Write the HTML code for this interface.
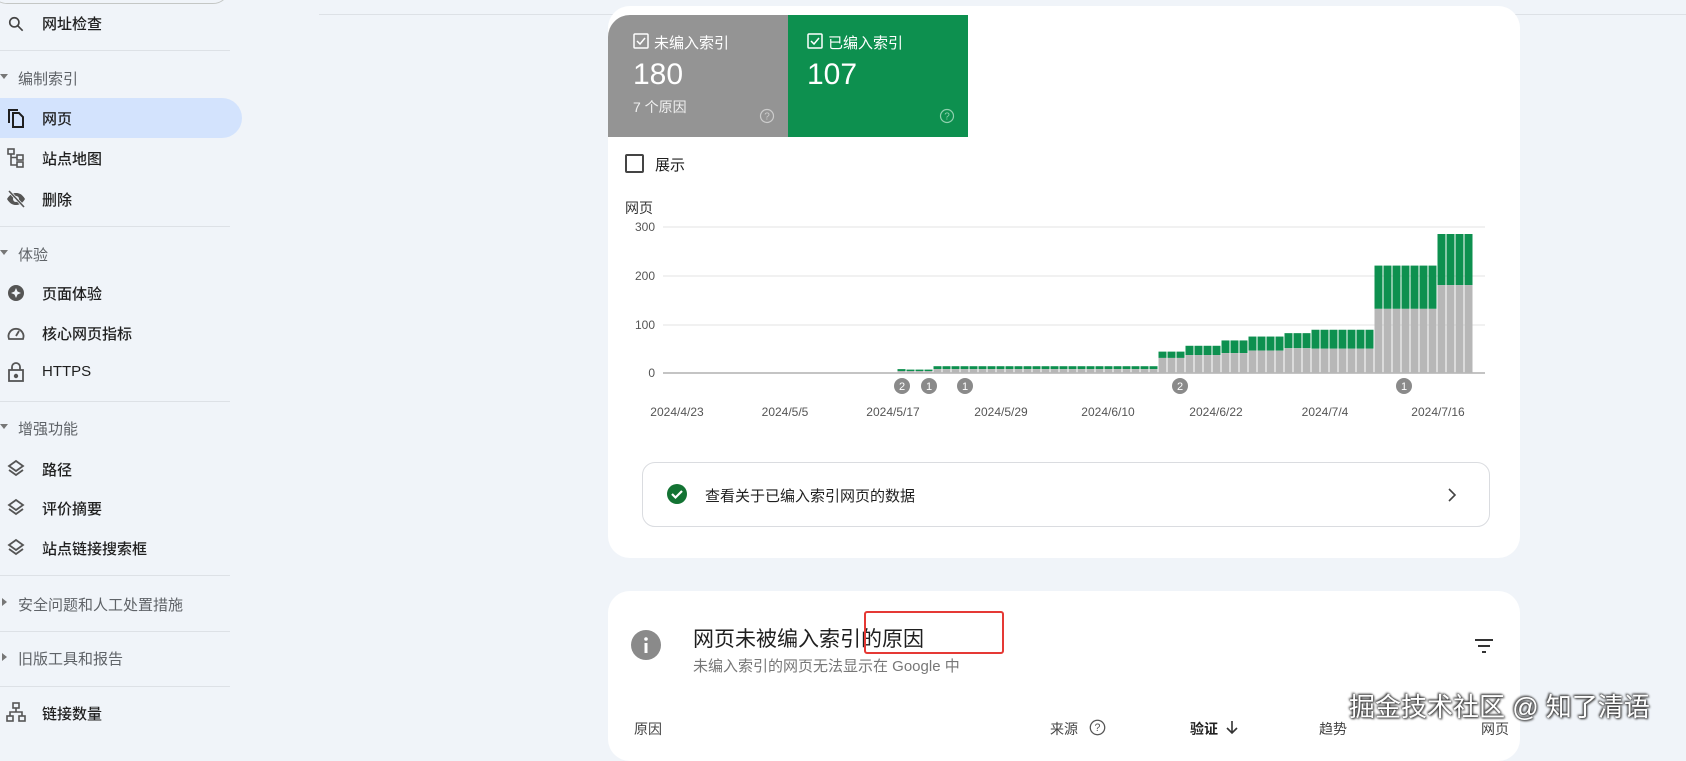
<!DOCTYPE html>
<html><head><meta charset="utf-8">
<style>
*{margin:0;padding:0;box-sizing:border-box}
body{width:1686px;height:738px;overflow:hidden;background:#f0f4f9;font-family:"Liberation Sans","Noto Sans CJK SC",sans-serif;position:relative;color:#1f1f1f}
.a{position:absolute;white-space:nowrap}
.si{font-size:15px;color:#1f1f1f;font-weight:500}
.sh{font-size:15px;color:#5f6368}
.dv{position:absolute;left:0;width:230px;height:1px;background:#dde1e6}
.ic{position:absolute;left:6px}
.card{position:absolute;background:#fff;border-radius:22px;left:608px;width:912px}
</style></head><body>
<div class="a" style="left:-10px;top:-30px;width:240px;height:34px;border:1px solid #c4c7c5;border-radius:17px"></div>
<div class="a" style="left:319px;top:14px;width:1367px;height:1px;background:#dde1e6"></div>

<!-- sidebar -->
<svg class="ic" style="top:14px" width="20" height="20" viewBox="0 0 24 24"><circle cx="10" cy="10" r="5.5" fill="none" stroke="#444" stroke-width="2"/><path d="M14 14l6 6" stroke="#444" stroke-width="2"/></svg>
<div class="a si" style="left:42px;top:13px">网址检查</div>
<div class="dv" style="top:50px"></div>
<div class="a" style="left:0;top:74px;border:4px solid transparent;border-top:5px solid #777"></div>
<div class="a sh" style="left:18px;top:68px">编制索引</div>
<div class="a" style="left:-20px;top:98px;width:262px;height:40px;background:#d3e3fd;border-radius:0 20px 20px 0"></div>
<svg class="ic" style="top:107px" width="20" height="22" viewBox="0 0 20 22"><path d="M3 16V3h9" fill="none" stroke="#1f1f1f" stroke-width="2"/><path d="M7 6h6l4 4v10H7z" fill="none" stroke="#1f1f1f" stroke-width="2"/></svg>
<div class="a si" style="left:42px;top:108px">网页</div>
<svg class="ic" style="top:148px" width="20" height="20" viewBox="0 0 20 20" fill="none" stroke="#555" stroke-width="1.6"><rect x="2" y="1" width="6" height="5"/><rect x="11" y="7" width="6" height="5"/><rect x="11" y="14" width="6" height="5"/><path d="M5 6v11h6M5 9.5h6"/></svg>
<div class="a si" style="left:42px;top:148px">站点地图</div>
<svg class="ic" style="top:189px" width="20" height="20" viewBox="0 0 20 20"><path d="M1 10c3-5 6-6 9-6s6 1 9 6c-3 5-6 6-9 6s-6-1-9-6z" fill="#555"/><circle cx="10" cy="10" r="3" fill="#f0f4f9"/><path d="M3 2l15 16" stroke="#f0f4f9" stroke-width="3"/><path d="M3 2l15 16" stroke="#555" stroke-width="1.6"/></svg>
<div class="a si" style="left:42px;top:189px">删除</div>
<div class="dv" style="top:226px"></div>
<div class="a" style="left:0;top:250px;border:4px solid transparent;border-top:5px solid #777"></div>
<div class="a sh" style="left:18px;top:244px">体验</div>
<svg class="ic" style="top:283px" width="20" height="20" viewBox="0 0 20 20"><circle cx="10" cy="10" r="8" fill="#555"/><path d="M10 5l1.5 3.5L15 10l-3.5 1.5L10 15l-1.5-3.5L5 10l3.5-1.5z" fill="#f0f4f9"/></svg>
<div class="a si" style="left:42px;top:283px">页面体验</div>
<svg class="ic" style="top:323px" width="20" height="20" viewBox="0 0 20 20" fill="none" stroke="#555" stroke-width="1.8"><path d="M3 16a7.5 7.5 0 1 1 14 0z"/><path d="M10 13l3-5"/></svg>
<div class="a si" style="left:42px;top:323px">核心网页指标</div>
<svg class="ic" style="top:361px" width="20" height="22" viewBox="0 0 20 22" fill="none" stroke="#555" stroke-width="1.8"><rect x="3" y="9" width="14" height="11"/><path d="M6 9V6a4 4 0 0 1 8 0v3"/><circle cx="10" cy="15" r="1.3" fill="#555"/></svg>
<div class="a si" style="left:42px;top:363px">HTTPS</div>
<div class="dv" style="top:401px"></div>
<div class="a" style="left:0;top:424px;border:4px solid transparent;border-top:5px solid #777"></div>
<div class="a sh" style="left:18px;top:418px">增强功能</div>
<svg class="ic" style="top:459px" width="20" height="20" viewBox="0 0 20 20" fill="none" stroke="#555" stroke-width="1.8"><path d="M10 2l7 5-7 5-7-5z"/><path d="M3 11l7 5 7-5"/></svg>
<div class="a si" style="left:42px;top:459px">路径</div>
<svg class="ic" style="top:498px" width="20" height="20" viewBox="0 0 20 20" fill="none" stroke="#555" stroke-width="1.8"><path d="M10 2l7 5-7 5-7-5z"/><path d="M3 11l7 5 7-5"/></svg>
<div class="a si" style="left:42px;top:498px">评价摘要</div>
<svg class="ic" style="top:538px" width="20" height="20" viewBox="0 0 20 20" fill="none" stroke="#555" stroke-width="1.8"><path d="M10 2l7 5-7 5-7-5z"/><path d="M3 11l7 5 7-5"/></svg>
<div class="a si" style="left:42px;top:538px">站点链接搜索框</div>
<div class="dv" style="top:575px"></div>
<div class="a" style="left:2px;top:598px;border:4px solid transparent;border-left:5px solid #777"></div>
<div class="a sh" style="left:18px;top:594px">安全问题和人工处置措施</div>
<div class="dv" style="top:631px"></div>
<div class="a" style="left:2px;top:653px;border:4px solid transparent;border-left:5px solid #777"></div>
<div class="a sh" style="left:18px;top:648px">旧版工具和报告</div>
<div class="dv" style="top:686px"></div>
<svg class="ic" style="top:702px" width="20" height="20" viewBox="0 0 20 20" fill="none" stroke="#555" stroke-width="1.6"><rect x="7" y="1" width="6" height="5"/><rect x="1" y="14" width="6" height="5"/><rect x="13" y="14" width="6" height="5"/><path d="M10 6v4M4 14v-4h12v4"/></svg>
<div class="a si" style="left:42px;top:703px">链接数量</div>

<!-- card 1 -->
<div class="card" style="top:6px;height:552px"></div>
<div class="a" style="left:608px;top:15px;width:180px;height:122px;background:#949494;border-top-left-radius:22px"></div>
<div class="a" style="left:788px;top:15px;width:180px;height:122px;background:#0d904f"></div>
<svg class="a" style="left:633px;top:33px" width="16" height="16" viewBox="0 0 16 16"><rect x="1" y="1" width="14" height="14" fill="none" stroke="#fff" stroke-width="1.5" rx="1"/><path d="M4 8l3 3 5-6" fill="none" stroke="#fff" stroke-width="1.5"/></svg>
<div class="a" style="left:654px;top:32px;color:#fff;font-size:15px">未编入索引</div>
<div class="a" style="left:633px;top:58px;color:#fff;font-size:30px">180</div>
<div class="a" style="left:633px;top:97px;color:#f0f0f0;font-size:14px">7 个原因</div>
<svg class="a" style="left:759px;top:108px" width="16" height="16" viewBox="0 0 16 16"><circle cx="8" cy="8" r="6.5" fill="none" stroke="#ccc" stroke-width="1.2"/><text x="8" y="11.5" font-size="10" fill="#ccc" text-anchor="middle" font-family="Liberation Sans">?</text></svg>
<svg class="a" style="left:807px;top:33px" width="16" height="16" viewBox="0 0 16 16"><rect x="1" y="1" width="14" height="14" fill="none" stroke="#fff" stroke-width="1.5" rx="1"/><path d="M4 8l3 3 5-6" fill="none" stroke="#fff" stroke-width="1.5"/></svg>
<div class="a" style="left:828px;top:32px;color:#fff;font-size:15px">已编入索引</div>
<div class="a" style="left:807px;top:58px;color:#fff;font-size:30px">107</div>
<svg class="a" style="left:939px;top:108px" width="16" height="16" viewBox="0 0 16 16"><circle cx="8" cy="8" r="6.5" fill="none" stroke="#8fd0ae" stroke-width="1.2"/><text x="8" y="11.5" font-size="10" fill="#8fd0ae" text-anchor="middle" font-family="Liberation Sans">?</text></svg>

<div class="a" style="left:625px;top:154px;width:19px;height:19px;border:2px solid #444;border-radius:2px"></div>
<div class="a" style="left:655px;top:154px;font-size:15px">展示</div>
<div class="a" style="left:625px;top:198px;font-size:14px;color:#333">网页</div>

<svg class="a" id="ch" style="left:608px;top:210px" width="912" height="220" font-family="Liberation Sans" font-size="12"></svg>

<div class="a" style="left:642px;top:462px;width:848px;height:65px;border:1px solid #dadce0;border-radius:13px"></div>
<svg class="a" style="left:667px;top:484px" width="20" height="20" viewBox="0 0 20 20"><circle cx="10" cy="10" r="10" fill="#137333"/><path d="M5 10l3.5 3.5L15 7" fill="none" stroke="#fff" stroke-width="2.2"/></svg>
<div class="a" style="left:705px;top:485px;font-size:15px">查看关于已编入索引网页的数据</div>
<svg class="a" style="left:1447px;top:487px" width="10" height="16" viewBox="0 0 10 16"><path d="M2 2l6 6-6 6" fill="none" stroke="#444" stroke-width="1.6"/></svg>

<!-- card 2 -->
<div class="card" style="top:591px;height:170px"></div>
<svg class="a" style="left:631px;top:630px" width="30" height="30" viewBox="0 0 30 30"><circle cx="15" cy="15" r="15" fill="#8a8a8a"/><rect x="13.5" y="13" width="3" height="10" fill="#fff"/><circle cx="15" cy="9" r="1.8" fill="#fff"/></svg>
<div class="a" style="left:693px;top:623px;font-size:21px">网页未被编入索引的原因</div>
<div class="a" style="left:864px;top:611px;width:140px;height:43px;border:2px solid #e53935;border-radius:3px"></div>
<div class="a" style="left:693px;top:655px;font-size:15px;color:#777">未编入索引的网页无法显示在 Google 中</div>
<svg class="a" style="left:1474px;top:638px" width="20" height="16" viewBox="0 0 20 16" stroke="#333" stroke-width="2"><path d="M1 2h18M4 8h12M8 14h4"/></svg>
<div class="a" style="left:634px;top:719px;font-size:14px;color:#444">原因</div>
<div class="a" style="left:1050px;top:719px;font-size:14px;color:#444">来源</div>
<svg class="a" style="left:1089px;top:719px" width="17" height="17" viewBox="0 0 16 16"><circle cx="8" cy="8" r="6.8" fill="none" stroke="#555" stroke-width="1.2"/><text x="8" y="11.5" font-size="10" fill="#555" text-anchor="middle" font-family="Liberation Sans">?</text></svg>
<div class="a" style="left:1190px;top:719px;font-size:14px;font-weight:bold;color:#222">验证</div>
<svg class="a" style="left:1226px;top:720px" width="12" height="15" viewBox="0 0 12 15"><path d="M6 1v12M1 8l5 5 5-5" fill="none" stroke="#333" stroke-width="1.6"/></svg>
<div class="a" style="left:1319px;top:719px;font-size:14px;color:#444">趋势</div>
<div class="a" style="left:1481px;top:719px;font-size:14px;color:#444">网页</div>

<div class="a" style="left:1349px;top:687px;font-size:26px;color:#fff;text-shadow:0 0 2px #333,1px 1px 2px #333,-1px -1px 2px #333">掘金技术社区 @ 知了清语</div>

<script>
var s=document.getElementById('ch'),h='',ox=608,oy=210;
function Y(v){return 373-v*0.486-oy}
[[0,373],[100,325],[200,276],[300,227]].forEach(function(g){
 h+='<line x1="55" x2="877" y1="'+(g[1]-oy)+'" y2="'+(g[1]-oy)+'" stroke="'+(g[0]?'#e3e3e3':'#888')+'" stroke-width="1"/>';
 h+='<text x="47" y="'+(g[1]-oy+4)+'" text-anchor="end" fill="#555">'+g[0]+'</text>';
});
var seg=[[25,25,8,4],[26,28,7,4],[29,53,14,8],[54,56,44,31],[57,60,56,37],[61,63,67,41],[64,67,75,46],[68,70,82,51],[71,77,89,50],[78,84,221,132],[85,88,286,181]];
seg.forEach(function(q){for(var d=q[0];d<=q[1];d++){var x=672.5+9*d-ox;
 h+='<rect x="'+x+'" y="'+Y(q[2])+'" width="8" height="'+(Y(q[3])-Y(q[2]))+'" fill="#0d904f"/>';
 h+='<rect x="'+x+'" y="'+Y(q[3])+'" width="8" height="'+(q[3]*0.486)+'" fill="#b7b7b7"/>';}});
[[902,'2'],[929,'1'],[965,'1'],[1180,'2'],[1404,'1']].forEach(function(m){
 h+='<circle cx="'+(m[0]-ox)+'" cy="'+(386-oy)+'" r="8" fill="#8a8a8a"/><text x="'+(m[0]-ox)+'" y="'+(390-oy)+'" text-anchor="middle" fill="#fff" font-size="11">'+m[1]+'</text>';});
[[677,'2024/4/23'],[785,'2024/5/5'],[893,'2024/5/17'],[1001,'2024/5/29'],[1108,'2024/6/10'],[1216,'2024/6/22'],[1325,'2024/7/4'],[1438,'2024/7/16']].forEach(function(t){
 h+='<text x="'+(t[0]-ox)+'" y="'+(416-oy)+'" text-anchor="middle" fill="#555">'+t[1]+'</text>';});
s.innerHTML=h;
</script>
</body></html>
